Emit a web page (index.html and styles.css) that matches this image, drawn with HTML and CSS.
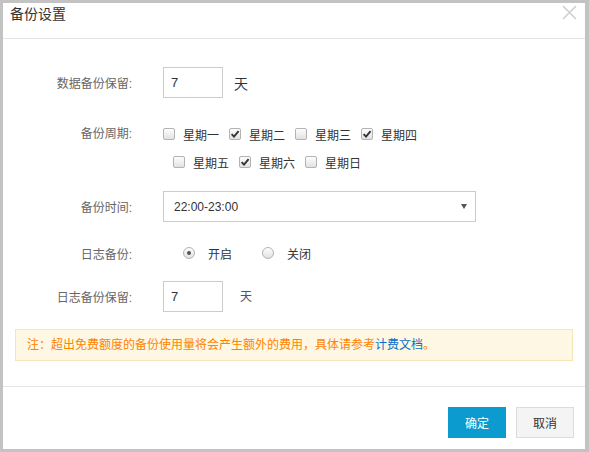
FILE: index.html
```html
<!DOCTYPE html>
<html lang="zh-CN">
<head>
<meta charset="utf-8">
<title>备份设置</title>
<link rel="stylesheet" href="styles.css">
</head>
<body>
<div class="dialog">
  <div class="header">
    <div class="title">备份设置</div>
    <svg class="close" width="15" height="15" viewBox="0 0 15 15"><path d="M1 1 L14 14 M14 1 L1 14" stroke="#cfcfcf" stroke-width="1.6" fill="none"/></svg>
  </div>
  <div class="content">
    <div class="row row-keep">
      <div class="label">数据备份保留:</div>
      <div class="input">7</div>
      <span class="unit unit-big">天</span>
    </div>
    <div class="row row-cycle">
      <div class="label">备份周期:</div>
      <div class="days">
        <div class="line">
          <span class="item"><span class="cb"></span>星期一</span>
          <span class="item"><span class="cb"><svg width="10" height="10" viewBox="0 0 10 10"><path d="M1.6 5.2 L4 7.6 L8.6 2.2" stroke="#333" stroke-width="1.9" fill="none"/></svg></span>星期二</span>
          <span class="item"><span class="cb"></span>星期三</span>
          <span class="item"><span class="cb"><svg width="10" height="10" viewBox="0 0 10 10"><path d="M1.6 5.2 L4 7.6 L8.6 2.2" stroke="#333" stroke-width="1.9" fill="none"/></svg></span>星期四</span>
        </div>
        <div class="line line2">
          <span class="item"><span class="cb"></span>星期五</span>
          <span class="item"><span class="cb"><svg width="10" height="10" viewBox="0 0 10 10"><path d="M1.6 5.2 L4 7.6 L8.6 2.2" stroke="#333" stroke-width="1.9" fill="none"/></svg></span>星期六</span>
          <span class="item"><span class="cb"></span>星期日</span>
        </div>
      </div>
    </div>
    <div class="row row-time">
      <div class="label">备份时间:</div>
      <div class="select"><span>22:00-23:00</span><span class="arrow"></span></div>
    </div>
    <div class="row row-log">
      <div class="label">日志备份:</div>
      <div class="radios">
        <span class="ritem"><span class="radio checked"></span>开启</span>
        <span class="ritem"><span class="radio"></span>关闭</span>
      </div>
    </div>
    <div class="row row-logkeep">
      <div class="label">日志备份保留:</div>
      <div class="input">7</div>
      <span class="unit unit-small">天</span>
    </div>
    <div class="notice">注：超出免费额度的备份使用量将会产生额外的费用，具体请参考<a class="link">计费文档</a>。</div>
  </div>
  <div class="footer">
    <button class="btn btn-primary">确定</button>
    <button class="btn btn-default">取消</button>
  </div>
</div>
</body>
</html>
```
FILE: styles.css
```css
html, body {
  margin: 0;
  padding: 0;
}
body {
  background: #c3c3c3;
  font-family: "Liberation Sans", "Noto Sans CJK SC", sans-serif;
  font-size: 12px;
  color: #333;
  width: 589px;
  height: 452px;
  overflow: hidden;
  padding-top: 3px;
  box-sizing: border-box;
}
.dialog {
  margin: 0 4px 3px 3px;
  height: 446px;
  background: #fff;
  display: flex;
  flex-direction: column;
}
.header {
  height: 36px;
  box-sizing: border-box;
  border-bottom: 1px solid #e5e5e5;
  display: flex;
  justify-content: space-between;
  align-items: flex-start;
  padding: 0 8px 0 7px;
}
.title {
  font-size: 14px;
  line-height: 22px;
  color: #333;
}
.close {
  margin-top: 2px;
  display: block;
}
.content {
  padding-top: 28px;
  display: flex;
  flex-direction: column;
}
.row {
  display: flex;
  align-items: center;
}
.label {
  width: 129px;
  margin-right: 31px;
  text-align: right;
  color: #666;
  flex-shrink: 0;
}
.input {
  width: 60px;
  height: 31px;
  box-sizing: border-box;
  border: 1px solid #ccc;
  padding-left: 7px;
  font-size: 13px;
  line-height: 29px;
  color: #333;
}
.unit-big {
  margin-left: 11px;
  font-size: 14px;
  color: #333;
}
.unit-small {
  margin-left: 17px;
  font-size: 12px;
  color: #555;
  margin-top: -2px;
}
.row-cycle {
  margin-top: 22px;
  align-items: flex-start;
}
.row-cycle .label {
  line-height: 28px;
}
.days {
  display: flex;
  flex-direction: column;
}
.line {
  display: flex;
  height: 28px;
  align-items: center;
}
.line2 {
  padding-left: 10px;
}
.item {
  display: inline-flex;
  align-items: center;
  margin-right: 10px;
  color: #333;
  width: 56px;
}
.cb {
  width: 12px;
  height: 12px;
  box-sizing: border-box;
  border: 1px solid #b3b3b3;
  border-radius: 2px;
  background: linear-gradient(#fdfdfd, #e2e2e2);
  margin-right: 8px;
  display: inline-flex;
  align-items: center;
  justify-content: center;
  flex-shrink: 0;
}
.cb svg {
  display: block;
}
.row-time {
  margin-top: 15px;
}
.select {
  width: 313px;
  height: 31px;
  box-sizing: border-box;
  border: 1px solid #ccc;
  padding: 0 8px 0 10px;
  display: flex;
  justify-content: space-between;
  align-items: center;
  color: #333;
}
.arrow {
  width: 0;
  height: 0;
  border-left: 3px solid transparent;
  border-right: 3px solid transparent;
  border-top: 5px solid #555;
}
.row-log {
  margin-top: 21px;
  height: 20px;
}
.radios {
  display: flex;
  align-items: center;
  margin-left: 20px;
}
.ritem {
  display: inline-flex;
  align-items: center;
  margin-right: 30px;
  color: #333;
}
.radio {
  width: 12px;
  height: 12px;
  box-sizing: border-box;
  border: 1px solid #b3b3b3;
  border-radius: 50%;
  background: linear-gradient(#fdfdfd, #e2e2e2);
  margin-right: 13px;
  display: inline-flex;
  align-items: center;
  justify-content: center;
}
.radio.checked::after {
  content: "";
  width: 4px;
  height: 4px;
  border-radius: 50%;
  background: #555;
}
.row-logkeep {
  margin-top: 18px;
}
.notice {
  margin: 17px 12px 0 12px;
  height: 32px;
  box-sizing: border-box;
  border: 1px solid #f8e4b8;
  background: #fdf7e4;
  padding-left: 11px;
  line-height: 30px;
  color: #ff8400;
}
.link {
  color: #0a6fc9;
  text-decoration: none;
}
.footer {
  margin-top: 25px;
  border-top: 1px solid #e5e5e5;
  padding: 20px 11px 0 0;
  display: flex;
  justify-content: flex-end;
  gap: 10px;
}
.btn {
  width: 58px;
  height: 31px;
  box-sizing: border-box;
  font-family: "Liberation Sans", "Noto Sans CJK SC", sans-serif;
  font-size: 12px;
  padding: 0;
  cursor: pointer;
}
.btn-primary {
  background: #0b9bcf;
  border: 1px solid #0b9bcf;
  color: #fff;
}
.btn-default {
  background: #f4f4f4;
  border: 1px solid #dcdcdc;
  color: #333;
}
```
